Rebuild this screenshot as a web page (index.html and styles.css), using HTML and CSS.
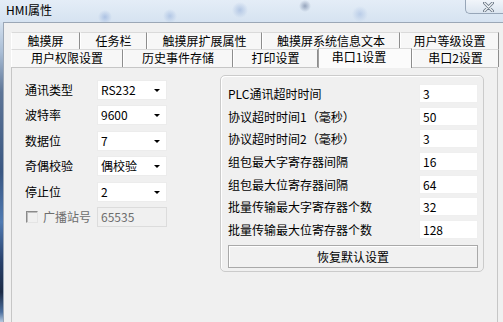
FILE: index.html
```html
<!DOCTYPE html>
<html lang="zh-CN">
<head>
<meta charset="utf-8">
<title>HMI属性</title>
<link rel="stylesheet" href="styles.css">
</head>
<body>
<div class="window">
    <div class="titlebar">
        <span class="title">HMI属性</span>
        <div class="close">
            <svg width="11" height="10" viewBox="0 0 11 10">
                <path d="M1.5 1 L9.5 9 M9.5 1 L1.5 9" stroke="#6e7a88" stroke-width="3" stroke-linecap="round"/>
                <path d="M1.5 1 L9.5 9 M9.5 1 L1.5 9" stroke="#f4f7fa" stroke-width="1.2" stroke-linecap="round"/>
            </svg>
        </div>
    </div>
    <div class="frame">
        <div class="glass"></div>
        <div class="client">
            <div class="tabs">
                <div class="tabrow first">
                    <div class="tab t11">触摸屏</div>
                    <div class="tab t12">任务栏</div>
                    <div class="tab t13">触摸屏扩展属性</div>
                    <div class="tab t14">触摸屏系统信息文本</div>
                    <div class="tab t15">用户等级设置</div>
                </div>
                <div class="tabrow second">
                    <div class="tab t21">用户权限设置</div>
                    <div class="tab t22">历史事件存储</div>
                    <div class="tab t23">打印设置</div>
                    <div class="tab t24 active">串口1设置</div>
                    <div class="tab t25">串口2设置</div>
                </div>
            </div>
            <div class="pane">
                <div class="serial">
                    <div class="label">通讯类型</div>
                    <div class="combo">RS232<span class="arrow"></span></div>
                    <div class="label">波特率</div>
                    <div class="combo">9600<span class="arrow"></span></div>
                    <div class="label">数据位</div>
                    <div class="combo">7<span class="arrow"></span></div>
                    <div class="label">奇偶校验</div>
                    <div class="combo">偶校验<span class="arrow"></span></div>
                    <div class="label">停止位</div>
                    <div class="combo">2<span class="arrow"></span></div>
                    <div class="label check-label"><span class="checkbox"></span>广播站号</div>
                    <div class="textbox disabled">65535</div>
                </div>
                <div class="group">
                    <div class="params">
                        <div class="plabel">PLC通讯超时时间</div><div class="value">3</div>
                        <div class="plabel">协议超时时间1（毫秒）</div><div class="value">50</div>
                        <div class="plabel">协议超时时间2（毫秒）</div><div class="value">3</div>
                        <div class="plabel">组包最大字寄存器间隔</div><div class="value">16</div>
                        <div class="plabel">组包最大位寄存器间隔</div><div class="value">64</div>
                        <div class="plabel">批量传输最大字寄存器个数</div><div class="value">32</div>
                        <div class="plabel">批量传输最大位寄存器个数</div><div class="value">128</div>
                    </div>
                    <div class="button">恢复默认设置</div>
                </div>
            </div>
        </div>
    </div>
</div>
</body>
</html>
```

FILE: styles.css
```css
body{
    margin: 0;
    width: 503px;
    height: 322px;
    overflow: hidden;
    font-family: "Noto Sans CJK SC", "Liberation Sans", sans-serif;
    font-size: 12px;
    color: #000;
    background: #2b4c7e;
}
.window{
    height: 322px;
    display: flex;
    flex-direction: column;
}
.titlebar{
    height: 22px;
    display: flex;
    align-items: flex-start;
    background:
        radial-gradient(circle at 105px 17px, rgba(90,130,200,.35) 0, rgba(90,130,200,0) 7px),
        radial-gradient(circle at 170px 16px, rgba(90,130,200,.3) 0, rgba(90,130,200,0) 7px),
        radial-gradient(circle at 240px 10px, rgba(80,120,190,.3) 0, rgba(80,120,190,0) 8px),
        radial-gradient(circle at 305px 6px, rgba(60,80,120,.45) 0, rgba(60,80,120,0) 6px),
        radial-gradient(circle at 360px 14px, rgba(90,130,200,.25) 0, rgba(90,130,200,0) 8px),
        linear-gradient(#e4edf7, #d6e3f1);
}
.title{
    padding: 3px 0 0 6px;
    line-height: 14px;
    font-size: 12px;
}
.close{
    margin-left: auto;
    width: 38px;
    height: 14px;
    box-sizing: border-box;
    border-left: 1px solid #97a6b8;
    border-bottom: 1px solid #97a6b8;
    border-radius: 0 0 0 5px;
    background: linear-gradient(#f1f5fa, #dbe5f0);
    display: flex;
    align-items: center;
    padding-left: 17px;
}
.frame{
    flex: 1;
    display: flex;
}
.glass{
    width: 3px;
    background: linear-gradient(#d3e0ee 0, #a9bdd5 30px, #5d7597 70px, #3a5782 150px, #4f7ab2 200px, #28406a 240px, #1c2b45 270px, #4c6f9e 290px, #b4c9e0 300px);
}
.client{
    flex: 1;
    background: #f0f0f0;
    border-left: 1px solid #9ba7b6;
    border-top: 1px solid #9ba7b6;
    padding: 9px 0 0 7px;
    display: flex;
    flex-direction: column;
}
.tabs{
    width: 488px;
}
.tabrow{
    display: flex;
}
.tabrow.first{
    height: 17px;
}
.tabrow.second{
    height: 18px;
}
.tab{
    box-sizing: border-box;
    border-left: 1px solid #fff;
    border-right: 1px solid #8d8d8d;
    border-top: 1px solid #dadada;
    background: #f7f7f7;
    text-align: center;
    line-height: 16px;
    white-space: nowrap;
}
.tab.active{
    position: relative;
    margin-top: -1px;
    height: 20px;
    line-height: 15px;
    background: #fbfbfb;
    border-left: 1px solid #a0a0a0;
    padding-right: 12px;
}
.t11{ width: 69px; }
.t12{ width: 67px; }
.t13{ width: 115px; }
.t14{ width: 138px; }
.t15{ width: 99px; }
.t21{ width: 112px; }
.t22{ width: 110px; }
.t23{ width: 85px; }
.t24{ width: 94px; }
.t25{ width: 87px; }
.pane{
    flex: 1;
    width: 487px;
    box-sizing: border-box;
    border: 1px solid #c6c6c6;
    border-bottom: none;
    background: #f0f0f0;
    display: flex;
    align-items: flex-start;
    padding: 7px 0 0 13px;
}
.serial{
    display: grid;
    grid-template-columns: 72px 70px;
    grid-auto-rows: 20px;
    row-gap: 5.4px;
    margin-top: 5px;
    align-items: center;
}
.label{
    line-height: 20px;
    white-space: nowrap;
}
.combo, .textbox{
    position: relative;
    height: 20px;
    box-sizing: border-box;
    background: #fff;
    border: 1px solid #ececec;
    padding-left: 3px;
    line-height: 18px;
}
.arrow{
    position: absolute;
    right: 6px;
    top: 8px;
    border-left: 3px solid transparent;
    border-right: 3px solid transparent;
    border-top: 3px solid #000;
}
.textbox.disabled{
    background: #f0f0f0;
    border: 1px solid #dcdcdc;
    color: #6d6d6d;
}
.check-label{
    display: flex;
    align-items: center;
    color: #6d6d6d;
}
.checkbox{
    width: 12px;
    height: 12px;
    box-sizing: border-box;
    margin: 0 5px 0 1px;
    border-top: 1px solid #8a8a8a;
    border-left: 1px solid #8a8a8a;
    border-right: 1px solid #e4e4e4;
    border-bottom: 1px solid #e4e4e4;
    box-shadow: inset 1px 1px #bdbdbd;
    background: #f0f0f0;
}
.group{
    margin-left: 53px;
    width: 264px;
    height: 197px;
    box-sizing: border-box;
    border: 1px solid #cbcbcb;
    border-radius: 5px;
    box-shadow: inset 1px 1px #fff;
    padding: 8px 5px 3px 7px;
}
.params{
    display: grid;
    grid-template-columns: 1fr 59px;
    grid-auto-rows: 19px;
    row-gap: 3.67px;
    align-items: center;
}
.plabel{
    line-height: 19px;
    white-space: nowrap;
}
.value{
    height: 19px;
    box-sizing: border-box;
    background: #fff;
    border: 1px solid #efefef;
    padding-left: 3px;
    line-height: 17px;
}
.button{
    margin-top: 6.5px;
    height: 23px;
    box-sizing: border-box;
    border: 1px solid #a9a9a9;
    background: #f1f1f1;
    box-shadow: inset 1px 1px #fff;
    text-align: center;
    line-height: 21px;
}
```
